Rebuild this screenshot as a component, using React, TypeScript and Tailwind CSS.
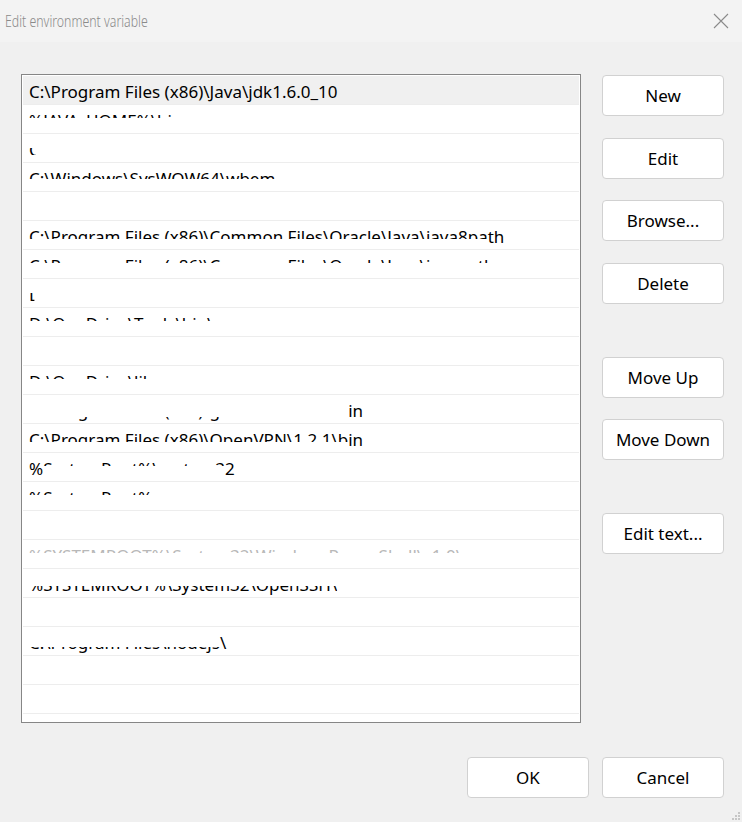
import React from 'react'

type Seg = { t: string; c?: [number, number, number, number]; dim?: boolean }

// visible fragments of each path row (the rest of the reference is masked)
const rows: Seg[][] = [
  [{ t: 'C:\\Program Files (x86)\\Java\\jdk1.6.0_10' }],
  [{ t: '%JAVA_HOME%\\bin;', c: [0, 0, 15, 0] }],
  [{ t: 'C', c: [10, 4, 7, 0] }],
  [{ t: 'C:\\Windows\\SysWOW64\\wbem', c: [0, 0, 12, 0] }],
  [],
  [{ t: 'C:\\Program Files (x86)\\Common Files\\Oracle\\Java\\java8pa', c: [0, 0, 10, 0] }, { t: 'th' }],
  [{ t: 'C:\\Program Files (x86)\\Common Files\\Oracle\\Java\\javapath', c: [0, 0, 15, 0] }],
  [{ t: 'D', c: [10, 7, 4, 0] }],
  [{ t: 'D:\\OneDrive\\Tools\\bin\\', c: [0, 0, 15, 0] }],
  [],
  [{ t: 'D:\\OneDrive\\lib', c: [0, 0, 15, 0] }],
  [{ t: 'C:\\Program Files (x86)\\gsudo\\Current\\ b', c: [18, 0, 0, 0] }, { t: 'in' }],
  [{ t: 'C:\\Program Files (x86)\\OpenVPN\\1.2.1\\b', c: [0, 0, 10, 0] }, { t: 'in' }],
  [{ t: '%' }, { t: 'SystemRoot%\\system3', c: [0, 0, 15, 0] }, { t: '2' }],
  [{ t: '%SystemRoot%', c: [0, 0, 15, 0] }],
  [],
  [{ t: '%SYSTEMROOT%\\System32\\WindowsPowerShell\\v1.0\\', c: [0, 0, 15, 0], dim: true }],
  [{ t: '%SYSTEMROOT%\\System32\\OpenSSH\\', c: [13, 0, 0, 0] }],
  [],
  [{ t: 'C:\\Program Files\\nodejs', c: [16, 0, 0, 0] }, { t: '\\' }],
  [],
  [],
]

function Btn({ label, className = '' }: { label: string; className?: string }) {
  return (
    <button
      className={
        'h-[41px] w-[122px] shrink-0 rounded-[4px] border border-[#d1d1d1] bg-white text-[17px] text-black ' +
        className
      }
    >
      {label}
    </button>
  )
}

export default function App() {
  return (
    <div
      className="flex h-[822px] w-[742px] flex-col bg-[#f0f0f0]"
      style={{ fontFamily: '"Noto Sans", "Open Sans", sans-serif' }}
    >
      {/* title bar */}
      <div className="flex h-[42px] items-center justify-between bg-[#f3f3f3] pl-[5px] pr-[12px]">
        <span className="origin-left scale-x-[0.77] text-[16px] font-light whitespace-nowrap text-[#8a8a8a]">
          Edit environment variable
        </span>
        <svg width="18" height="18" viewBox="0 0 18 18" className="mb-[1px]">
          <path d="M2 2 L16 16 M16 2 L2 16" stroke="#8a8a8a" strokeWidth="1.1" fill="none" />
        </svg>
      </div>

      <div className="flex gap-[21px] pl-[21px] pt-[32px]">
        {/* path list */}
        <div className="h-[649px] w-[560px] overflow-hidden border border-[#868686] bg-white p-[1px]">
          {rows.map((segs, i) => (
            <div
              key={i}
              className={
                'flex h-[29px] items-center border-b border-[#ededed] pl-[6px] pt-[4px] text-[17px] leading-[24px] text-black whitespace-pre ' +
                (i === 0 ? 'bg-[#f0f0f0]' : '')
              }
            >
              {segs.map((s, j) => (
                <span
                  key={j}
                  className={s.dim ? 'text-[#b8b8b8]' : ''}
                  style={s.c ? { clipPath: `inset(${s.c[0]}px ${s.c[1]}px ${s.c[2]}px ${s.c[3]}px)` } : undefined}
                >
                  {s.t}
                </span>
              ))}
            </div>
          ))}
        </div>

        {/* action buttons */}
        <div className="flex flex-col pt-[1px]">
          <Btn label="New" />
          <Btn label="Edit" className="mt-[22px]" />
          <Btn label="Browse..." className="mt-[21px]" />
          <Btn label="Delete" className="mt-[22px]" />
          <Btn label="Move Up" className="mt-[53px]" />
          <Btn label="Move Down" className="mt-[21px]" />
          <Btn label="Edit text..." className="mt-[53px]" />
        </div>
      </div>

      {/* footer */}
      <div className="mt-[34px] flex justify-end gap-[13px] pr-[18px]">
        <Btn label="OK" />
        <Btn label="Cancel" />
      </div>

      <div className="mt-auto flex justify-end pb-[2px] pr-[2px]">
        <svg width="10" height="10" viewBox="0 0 10 10">
          <rect x="8" y="2" width="2" height="2" fill="#c6c6c6" />
          <rect x="5" y="5" width="2" height="2" fill="#c6c6c6" />
          <rect x="8" y="5" width="2" height="2" fill="#c6c6c6" />
          <rect x="2" y="8" width="2" height="2" fill="#c6c6c6" />
          <rect x="5" y="8" width="2" height="2" fill="#c6c6c6" />
          <rect x="8" y="8" width="2" height="2" fill="#c6c6c6" />
        </svg>
      </div>
    </div>
  )
}
